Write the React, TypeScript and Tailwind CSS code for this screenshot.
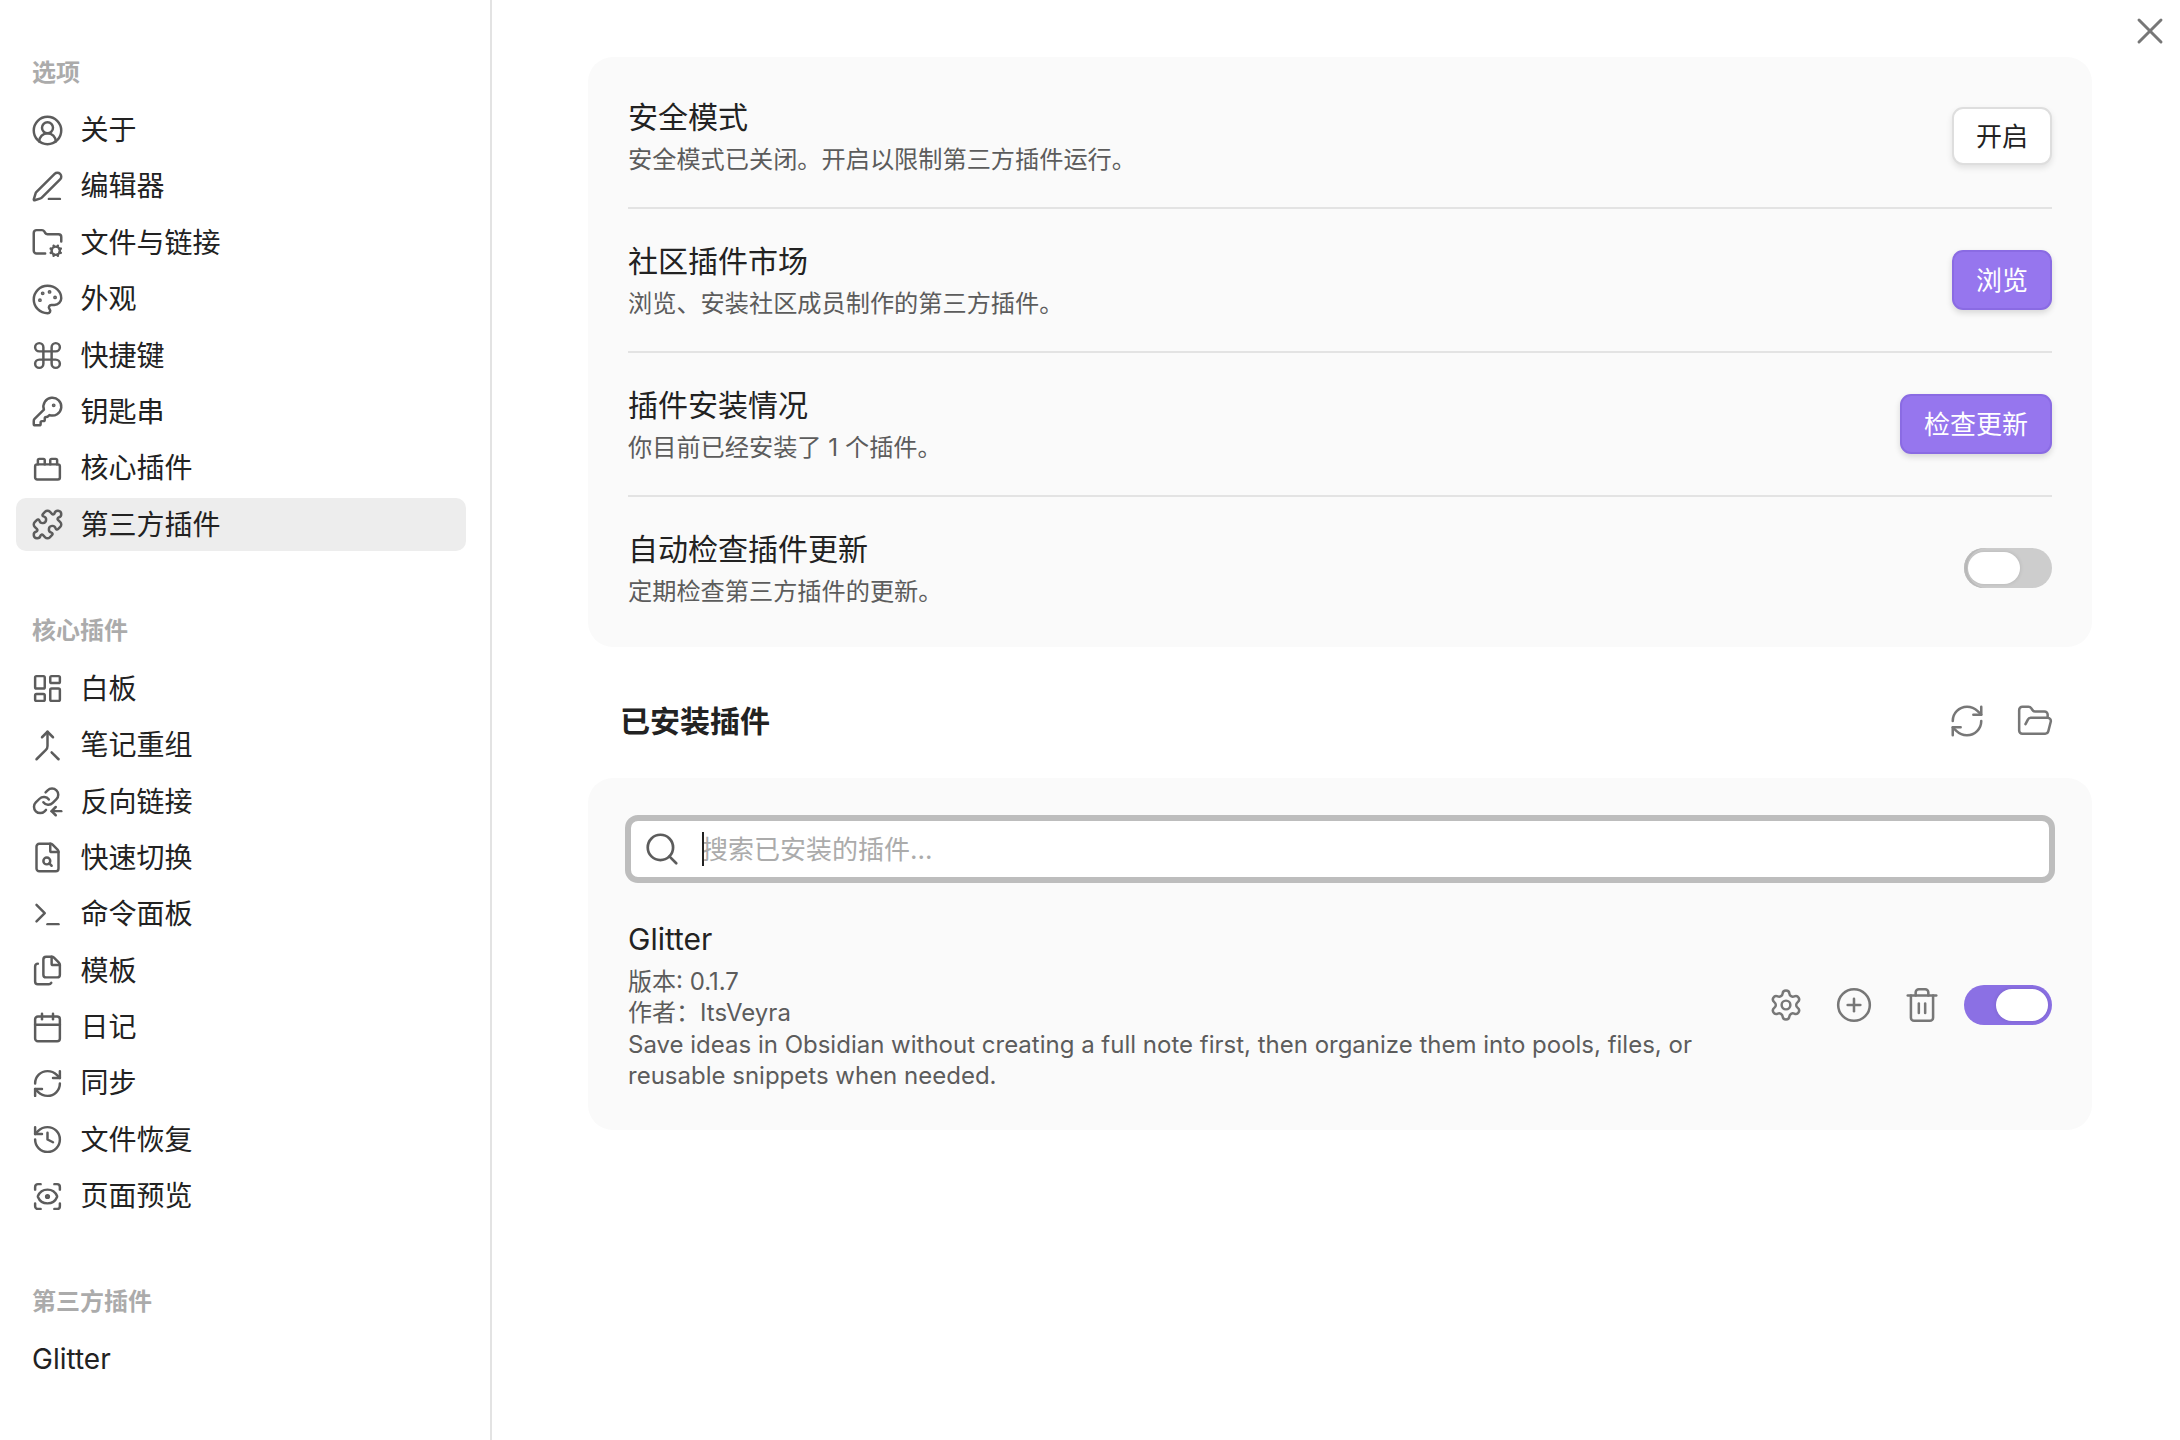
import {
  Calendar,
  CirclePlus,
  CircleUserRound,
  Command,
  FileSearch,
  Files,
  FolderCog,
  FolderOpen,
  History,
  KeyRound,
  LayoutDashboard,
  Merge,
  Palette,
  PenLine,
  Puzzle,
  RefreshCw,
  ScanEye,
  Search,
  Settings,
  Terminal,
  Trash2,
  X,
} from "lucide-react";
import type { ComponentType, ReactNode } from "react";

type IconType = ComponentType<{ className?: string; strokeWidth?: number }>;

function LegoIcon({ className, strokeWidth }: { className?: string; strokeWidth?: number }) {
  return (
    <svg viewBox="0 0 24 24" fill="none" stroke="currentColor" strokeWidth={strokeWidth} strokeLinecap="round" strokeLinejoin="round" className={className}>
      <rect x="3" y="9" width="18" height="11" rx="1.5" />
      <path d="M5 9V6a1 1 0 0 1 1-1h3a1 1 0 0 1 1 1v3" />
      <path d="M14 9V6a1 1 0 0 1 1-1h3a1 1 0 0 1 1 1v3" />
    </svg>
  );
}

function BacklinkIcon({ className, strokeWidth }: { className?: string; strokeWidth?: number }) {
  return (
    <svg viewBox="0 0 24 24" fill="none" stroke="currentColor" strokeWidth={strokeWidth} strokeLinecap="round" strokeLinejoin="round" className={className}>
      <path d="M9 12.5a4.5 4.5 0 0 0 6.8.5l2.7-2.7a4.5 4.5 0 0 0-6.4-6.4l-1.5 1.5" />
      <path d="M13 10.5a4.5 4.5 0 0 0-6.8-.5l-2.7 2.7a4.5 4.5 0 0 0 6.4 6.4l1-1" />
      <path d="M22 19h-7" />
      <path d="M18 16l-3 3 3 3" />
    </svg>
  );
}

const optionItems: { label: string; icon: IconType; active?: boolean }[] = [
  { label: "关于", icon: CircleUserRound },
  { label: "编辑器", icon: PenLine },
  { label: "文件与链接", icon: FolderCog },
  { label: "外观", icon: Palette },
  { label: "快捷键", icon: Command },
  { label: "钥匙串", icon: KeyRound },
  { label: "核心插件", icon: LegoIcon },
  { label: "第三方插件", icon: Puzzle, active: true },
];

const coreItems: { label: string; icon: IconType }[] = [
  { label: "白板", icon: LayoutDashboard },
  { label: "笔记重组", icon: Merge },
  { label: "反向链接", icon: BacklinkIcon },
  { label: "快速切换", icon: FileSearch },
  { label: "命令面板", icon: Terminal },
  { label: "模板", icon: Files },
  { label: "日记", icon: Calendar },
  { label: "同步", icon: RefreshCw },
  { label: "文件恢复", icon: History },
  { label: "页面预览", icon: ScanEye },
];

function NavRow({ label, icon: Icon, active }: { label: string; icon?: IconType; active?: boolean }) {
  return (
    <div className={`flex h-[53px] items-center gap-[16.5px] rounded-[10px] text-[28px] text-[#222222] ${Icon ? "pl-[15px]" : "pl-[16px]"} ${active ? "bg-[#ededed]" : ""}`}>
      {Icon && <Icon className="h-[33px] w-[33px] shrink-0 text-[#5c5c5c]" strokeWidth={1.8} />}
      <span>{label}</span>
    </div>
  );
}

function NavGroup({ title, children, className }: { title: string; children: ReactNode; className?: string }) {
  return (
    <div className={className}>
      <div className="mb-[8px] flex h-[46px] items-center pl-[16px] text-[24px] font-semibold text-[#ababab]">{title}</div>
      <div className="flex flex-col gap-[3.4px]">{children}</div>
    </div>
  );
}

function SettingRow({ name, desc, control, last }: { name: string; desc: string; control: ReactNode; last?: boolean }) {
  return (
    <div className={`flex items-center justify-between ${last ? "h-[142px]" : "h-[144px] border-b-2 border-[#e3e3e3]"}`}>
      <div className="-mt-[5.5px]">
        <div className="text-[30px] leading-[53.5px] text-[#222222]">{name}</div>
        <div className="text-[24.2px] leading-[32px] text-[#5c5c5c]">{desc}</div>
      </div>
      {control}
    </div>
  );
}

function PurpleButton({ children, className }: { children: ReactNode; className: string }) {
  return (
    <button className={`flex h-[60px] items-center justify-center rounded-[11px] border-2 border-[#8a6be3] bg-[#9676ee] text-[26px] text-white shadow-[0_3px_6px_rgba(0,0,0,0.14)] ${className}`}>
      {children}
    </button>
  );
}

function Toggle({ on }: { on?: boolean }) {
  return (
    <div className={`flex h-[40px] w-[88px] shrink-0 items-center rounded-full ${on ? "justify-end bg-[#8b70e4] pr-[4px]" : "bg-[#cdcdcd] pl-[4px] shadow-[inset_3px_0_0_#bcbcbc]"}`}>
      <div className="h-[32px] w-[52px] rounded-full bg-white shadow-[0_0_4px_rgba(0,0,0,0.12)]" />
    </div>
  );
}

export default function App() {
  return (
    <div className="relative flex h-[1440px] w-[2180px] overflow-hidden bg-white font-[Inter,'Noto_Sans_CJK_SC',sans-serif]">
      {/* Sidebar */}
      <aside className="flex w-[492px] shrink-0 flex-col gap-[56px] border-r-2 border-[#e3e3e3] pl-[16px] pr-[24px] pt-[49.5px]">
        <NavGroup title="选项" className="mb-[1px]">
          {optionItems.map((item) => (
            <NavRow key={item.label} {...item} />
          ))}
        </NavGroup>
        <NavGroup title="核心插件">
          {coreItems.map((item) => (
            <NavRow key={item.label} {...item} />
          ))}
        </NavGroup>
        <NavGroup title="第三方插件">
          <NavRow label="Glitter" />
        </NavGroup>
      </aside>

      {/* Content */}
      <main className="w-[1688px] pl-[96px] pt-[57px]">
        <section className="w-[1504px] rounded-[25px] bg-[#fafafa] px-[40px] py-[8px]">
          <SettingRow
            name="安全模式"
            desc="安全模式已关闭。开启以限制第三方插件运行。"
            control={
              <button className="flex h-[58px] w-[100px] items-center justify-center rounded-[11px] border-2 border-[#dedede] bg-white text-[26px] text-[#222222] shadow-[0_3px_6px_rgba(0,0,0,0.1)]">
                开启
              </button>
            }
          />
          <SettingRow name="社区插件市场" desc="浏览、安装社区成员制作的第三方插件。" control={<PurpleButton className="w-[100px]">浏览</PurpleButton>} />
          <SettingRow name="插件安装情况" desc="你目前已经安装了 1 个插件。" control={<PurpleButton className="w-[152px]">检查更新</PurpleButton>} />
          <SettingRow name="自动检查插件更新" desc="定期检查第三方插件的更新。" control={<Toggle />} last />
        </section>

        <div className="flex h-[131px] w-[1466px] items-center justify-between pl-[32px] pt-[18px] text-[#777777]">
          <h2 className="text-[30px] font-semibold text-[#222222]">已安装插件</h2>
          <div className="-mt-[2px] flex items-center gap-[30px]">
            <RefreshCw className="h-[38px] w-[38px]" strokeWidth={1.6} />
            <FolderOpen className="h-[38px] w-[38px]" strokeWidth={1.6} />
          </div>
        </div>

        <section className="w-[1504px] rounded-[25px] bg-[#fafafa] px-[40px] pb-[38px] pt-[37px]">
          <div className="relative -mx-[3px] flex h-[68px] items-center rounded-[13px] border-[6px] border-[#bdbdbd] bg-white pl-[12px]">
            <Search className="h-[38px] w-[38px] shrink-0 text-[#5c5c5c]" strokeWidth={1.7} />
            <input
              readOnly
              placeholder="搜索已安装的插件..."
              className="ml-[21px] h-[44px] flex-1 bg-transparent text-[26px] outline-none placeholder:text-[#ababab]"
            />
            <span className="absolute left-[71px] top-[11px] h-[34px] w-[2px] bg-[#222222]" />
          </div>
          <div className="mt-[29px] flex items-center justify-between">
            <div className="w-[1070px]">
              <div className="text-[30px] leading-[54px] text-[#222222]">Glitter</div>
              <div className="text-[24px] leading-[31.4px] text-[#5c5c5c]">
                <div>版本: 0.1.7</div>
                <div>作者：ItsVeyra</div>
                <div>Save ideas in Obsidian without creating a full note first, then organize them into pools, files, or reusable snippets when needed.</div>
              </div>
            </div>
            <div className="flex items-center pt-[6px] text-[#777777]">
              <div className="mr-[23px] flex items-center gap-[30px]">
                <Settings className="h-[38px] w-[38px] p-[1.5px]" strokeWidth={1.7} />
                <CirclePlus className="h-[38px] w-[38px]" strokeWidth={1.6} />
                <Trash2 className="h-[38px] w-[38px]" strokeWidth={1.6} />
              </div>
              <Toggle on />
            </div>
          </div>
        </section>
      </main>

      <X className="absolute right-[8px] top-[9px] h-[44px] w-[44px] text-[#777777]" strokeWidth={1.6} />
    </div>
  );
}
